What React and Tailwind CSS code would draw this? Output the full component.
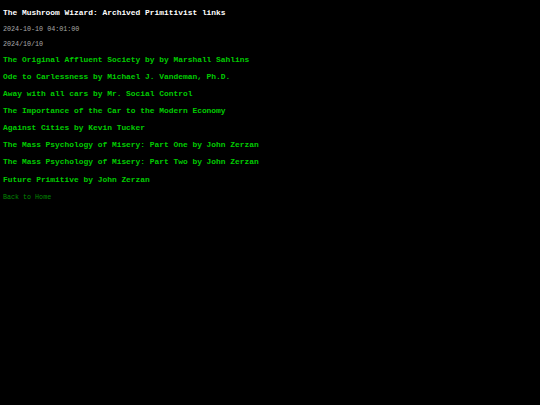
const links = [
  "The Original Affluent Society by by Marshall Sahlins",
  "Ode to Carlessness by Michael J. Vandeman, Ph.D.",
  "Away with all cars by Mr. Social Control",
  "The Importance of the Car to the Modern Economy",
  "Against Cities by Kevin Tucker",
  "The Mass Psychology of Misery: Part One by John Zerzan",
  "The Mass Psychology of Misery: Part Two by John Zerzan",
  "Future Primitive by John Zerzan",
];

export default function App() {
  return (
    <div className="min-h-[405px] w-full bg-black px-[3px] pt-[5px] font-['Liberation_Mono','Courier_New',monospace] whitespace-nowrap">
      <h1 className="text-[7.9px] font-bold leading-[16px] text-white">
        The Mushroom Wizard: Archived Primitivist links
      </h1>
      <div className="text-[6.7px] leading-[16px] text-[#a8a8a8]">2024-10-10 04:01:00</div>
      <div className="text-[6.7px] leading-[15px] text-[#a8a8a8]">2024/10/10</div>
      <ul className="text-[7.9px]">
        {links.map((l, i) => (
          <li key={i} className={i === 0 ? "leading-[16px]" : "leading-[17.1px]"}>
            <a className="font-bold text-[#00cc00]">{l}</a>
          </li>
        ))}
      </ul>
      <a className="mt-[1px] block text-[6.7px] leading-[17.1px] text-[#008800]">Back to Home</a>
    </div>
  );
}
